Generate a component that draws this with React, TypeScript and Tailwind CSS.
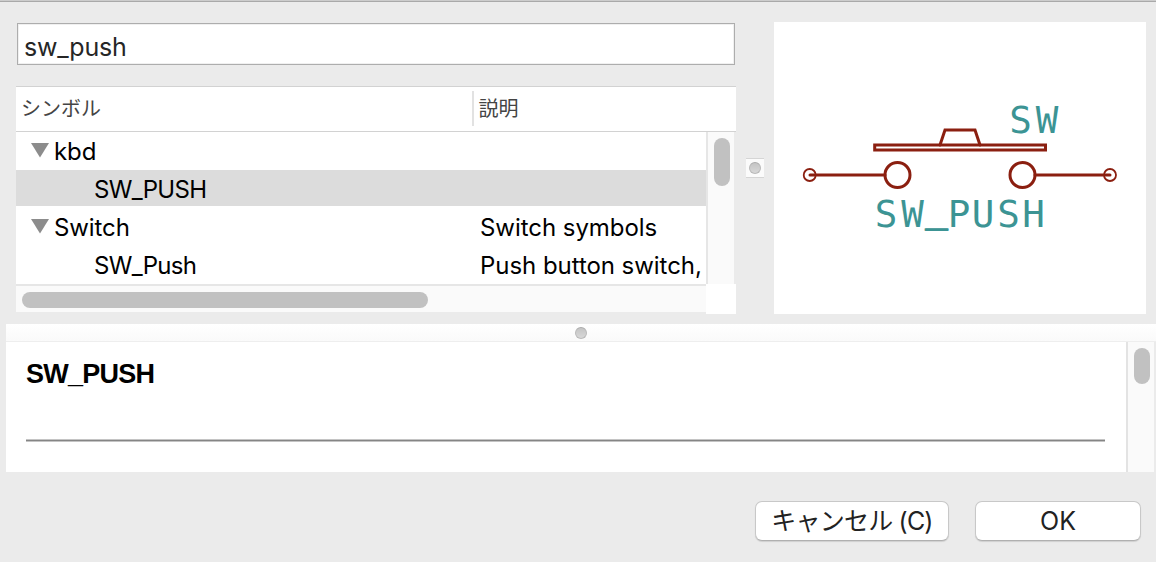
import type { ReactNode } from "react";

type RowProps = {
  name: string;
  description?: string;
  group?: boolean;
  selected?: boolean;
};

function Row({ name, description, group, selected }: RowProps) {
  return (
    <div className="flex h-[38px] shrink-0 flex-col">
      <div className={`flex h-9 items-center ${selected ? "bg-[#dcdcdc]" : ""}`}>
        <div className={`flex w-[464px] shrink-0 items-center ${group ? "pl-[15px]" : "pl-[78px]"}`}>
          {group && (
            <svg width="18" height="15" viewBox="0 0 18 15" className="mr-[5px]">
              <path d="M0 0H18L9 14.5Z" fill="#8c8c8c" />
            </svg>
          )}
          <span className={`pt-[3px] ${group ? "tracking-[-0.1px]" : "tracking-[-0.7px]"}`}>{name}</span>
        </div>
        <span className="pt-[3px] tracking-[-0.05px] whitespace-nowrap">{description}</span>
      </div>
    </div>
  );
}

function Knob() {
  return (
    <span className="block size-3 rounded-full border border-[#b9b9b9] border-t-[#aaaaaa] bg-linear-to-b from-[#c4c4c4] to-[#d8d8d8]" />
  );
}

function Button({ className, children }: { className: string; children: ReactNode }) {
  return (
    <button
      className={`flex h-10 items-center justify-center rounded-[7px] border border-[#c8c8c8] border-b-[#b0b0b0] bg-white pt-0.5 text-[25px] whitespace-nowrap text-[#222222] shadow-[0_1px_1px_rgba(0,0,0,0.12)] ${className}`}
    >
      {children}
    </button>
  );
}

function SymbolPreview() {
  return (
    <svg width="372" height="292" viewBox="774 22 372 292">
      <g fill="none" stroke="#8b1f10" strokeWidth="3" strokeLinecap="round">
        <rect x="874.7" y="145" width="170.8" height="5" strokeLinejoin="miter" />
        <path d="M940 145L945 130H975L980 145" />
        <circle cx="897.5" cy="175" r="12.5" />
        <circle cx="1022.5" cy="175" r="12.5" />
        <path d="M810 175H885M1035 175H1110" />
        <circle cx="809.7" cy="175" r="6" strokeWidth="1.8" />
        <circle cx="1110" cy="175" r="6" strokeWidth="1.8" />
      </g>
      <g
        fill="#3c9494"
        fontSize="37.5"
        textAnchor="middle"
        className="font-['DejaVu_Sans_Mono',monospace]"
      >
        <text y="132.5" x="1020.5 1047">
          SW
        </text>
        <text y="227" x="886 912.5 936.5 959 983 1008.5 1033.5" dy="0 0 -6 6">
          SW
          <tspan stroke="#3c9494" strokeWidth="1.3" strokeLinejoin="round">_</tspan>
          PUSH
        </text>
      </g>
    </svg>
  );
}

export default function App() {
  return (
    <div className="flex h-[562px] w-[1156px] flex-col overflow-hidden bg-[#ebebeb] font-['Inter','Noto_Sans_CJK_JP',sans-serif] text-black">
      <div className="h-0.5 shrink-0 border-b border-[#a9a9a9] bg-[#cccccc]" />

      <div className="mt-5 flex h-[292px] shrink-0 pl-4">
        <div className="flex w-[720px] flex-col">
          <div className="mx-px mt-px flex h-[42px] items-center border border-[#adadad] bg-white pt-[7px] pl-1.5 text-[25px] tracking-[-0.2px] text-[#262626] shadow-[inset_0_0_0_1px_#f0f0f0]">
            sw_push
          </div>

          <div className="mt-[21px] flex h-[228px] flex-col">
            <div className="flex h-[46px] shrink-0 items-center border-y border-[#d2d2d2] bg-white text-[20px] text-[#444444]">
              <div className="w-[456px] pl-[5px] leading-none">シンボル</div>
              <div className="-mt-0.5 h-[35px] w-0.5 bg-[#e2e2e2]" />
              <div className="pl-[4.5px] leading-none">説明</div>
            </div>
            <div className="flex h-[152px]">
              <div className="w-[690px] overflow-hidden bg-white text-[24px] leading-[33px]">
                <Row name="kbd" group />
                <Row name="SW_PUSH" selected />
                <Row name="Switch" description="Switch symbols" group />
                <Row name="SW_Push" description="Push button switch," />
              </div>
              <div className="w-7 border-l-2 border-[#e6e6e6] bg-[#fafafa] pt-1.5 pl-1.5">
                <div className="h-12 w-4 rounded-full bg-[#c1c1c1]" />
              </div>
            </div>
            <div className="flex h-[30px]">
              <div className="h-7 w-[690px] border-t-2 border-[#e6e6e6] bg-[#fafafa] pt-1.5 pl-1.5">
                <div className="h-4 w-[406px] rounded-full bg-[#c1c1c1]" />
              </div>
              <div className="w-[30px] bg-white" />
            </div>
          </div>
        </div>

        <div className="flex w-[38px] items-center justify-center">
          <div className="flex h-5 w-[18px] items-center justify-center border-y border-[#d5d5d5] bg-[#fbfbfb]">
            <Knob />
          </div>
        </div>

        <div className="w-[372px] bg-white">
          <SymbolPreview />
        </div>
      </div>

      <div className="mt-2.5 ml-1.5 flex h-[18px] shrink-0 items-center justify-center border-b border-[#eeeeee] bg-linear-to-b from-white to-[#fafafa]">
        <Knob />
      </div>

      <div className="ml-1.5 flex h-[130px] shrink-0">
        <div className="w-[1120px] bg-white pt-4 pl-5">
          <h1 className="font-['Liberation_Sans',sans-serif] text-[27px] leading-8 font-bold tracking-[-0.75px]">
            SW_PUSH
          </h1>
          <div className="mt-[49px] h-[3px] w-[1079px] border-y border-[#c4c4c4] bg-[#858585]" />
        </div>
        <div className="w-7 border-l-2 border-[#e3e3e3] bg-[#fafafa] pt-1.5 pl-1.5">
          <div className="h-9 w-4 rounded-full bg-[#c1c1c1]" />
        </div>
      </div>

      <div className="mt-[29px] flex justify-end gap-[26px] pr-[15px]">
        <Button className="w-[194px] tracking-[-0.8px]">キャンセル (C)</Button>
        <Button className="w-[166px]">OK</Button>
      </div>
    </div>
  );
}
